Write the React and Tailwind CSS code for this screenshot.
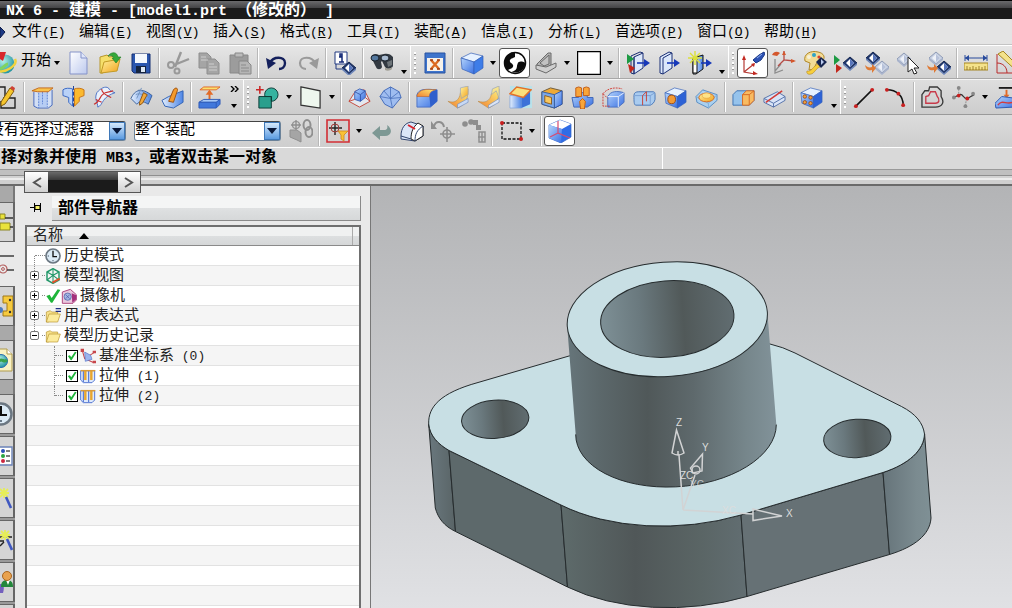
import React, { useState } from 'react';

const menus = [
    ['文件', 'F'], ['编辑', 'E'], ['视图', 'V'], ['插入', 'S'], ['格式', 'R'], ['工具', 'T'],
    ['装配', 'A'], ['信息', 'I'], ['分析', 'L'], ['首选项', 'P'], ['窗口', 'O'], ['帮助', 'H'],
];

const Svg = ({ children, size = 24 }) => (
    <svg width={size} height={size} viewBox="0 0 24 24" fill="none" stroke="none" className="shrink-0" aria-hidden="true">{children}</svg>
);

// Gradients shared by all the toolbar icons
const Defs = () => (
    <svg width="0" height="0" className="absolute" aria-hidden="true">
        <defs>
            <linearGradient id="blue" x1="0" y1="0" x2="1" y2="1"><stop offset="0" stopColor="#b4d4fc" /><stop offset="1" stopColor="#3a70e2" /></linearGradient>
            <linearGradient id="blueH" x1="0" y1="0" x2="1" y2="0"><stop offset="0" stopColor="#e3eefc" /><stop offset="1" stopColor="#4e86e6" /></linearGradient>
            <linearGradient id="gold" x1="0" y1="0" x2="1" y2="1"><stop offset="0" stopColor="#fff3a0" /><stop offset="1" stopColor="#f2a21c" /></linearGradient>
            <linearGradient id="amber" x1="0" y1="1" x2="1" y2="0"><stop offset="0" stopColor="#f08030" /><stop offset="1" stopColor="#fff07a" /></linearGradient>
            <linearGradient id="paper" x1="0" y1="0" x2="1" y2="1"><stop offset="0" stopColor="#ffffff" /><stop offset="1" stopColor="#bcc9ee" /></linearGradient>
            <radialGradient id="globe" cx="0.4" cy="0.35" r="0.7"><stop offset="0" stopColor="#b4f0e8" /><stop offset="1" stopColor="#1b8f9c" /></radialGradient>
        </defs>
    </svg>
);

const Diamond = ({ x, y, pale }) => (
    <g transform={`translate(${x} ${y})`}>
        <path d="M-7 0 0-6 7 0 0 6Z" fill={pale ? '#c9d2e4' : '#20386f'} stroke={pale ? '#8f9bb5' : '#15264f'} />
        <path d="M-7 0v2l7 6 7-6V0L0 6Z" fill={pale ? '#a9b4cd' : '#6d86ba'} />
        <path d="M-4 0 0-4 4 0 0 4Z" fill={pale ? '#eef1f8' : '#fff'} />
        <path d="M0-4 4 0 0 4Z" fill={pale ? '#b7c2da' : '#5876bd'} />
    </g>
);

const Box = ({ top = '#e6f1ff', left = 'url(#blue)', right = '#2d62d6' }) => (
    <g stroke="#3560b8" strokeWidth="0.7">
        <path d="M1 7 11 2l12 3-9 6Z" fill={top} />
        <path d="M1 7l13 4v12L2 18Z" fill={left} />
        <path d="M14 11l9-6v12l-9 6Z" fill={right} />
    </g>
);

const icons = {
    newFile: <><path d="M3 1h11l6 6v16H3Z" fill="url(#paper)" stroke="#8593c9" /><path d="M14 1v6h6" fill="#dfe6fa" stroke="#8593c9" /></>,
    open: <><path d="M2 6l7-2 2 2 8-1v5L5 22H2Z" fill="#f5df6a" stroke="#b9972a" /><path d="M6 11l16-3-3 12-16 2Z" fill="url(#gold)" stroke="#c29a26" /><path d="M10 5c4-5 9-4 10 1h3l-5 6-4-5h2c-1-2-3-3-6-2Z" fill="#35a83a" stroke="#1b7a22" strokeWidth="0.6" /></>,
    save: <><path d="M3 3h18v19H5l-2-2Z" fill="#2a56ae" stroke="#152f72" /><path d="M6 3h12v9H6Z" fill="#f4f8fd" /><path d="M7 15h10v7H7Z" fill="#15243f" /><path d="M12 16h4v5h-4Z" fill="#dde8f4" /></>,
    cut: <g stroke="#999" strokeWidth="2.4"><path d="M15 1 9 16M23 8 8 14" /><circle cx="5" cy="14" r="3" strokeWidth="2" /><circle cx="11" cy="20" r="2.5" strokeWidth="2" /></g>,
    copy: <g fill="#a5a5a5" stroke="#8e8e8e"><path d="M2 2h8l4 4v11H2Z" /><path d="M10 8h8l4 4v11H10Z" /><path d="M4 6h5M4 9h7M12 13h5M12 16h8M12 19h8" stroke="#cfcfcf" /></g>,
    paste: <g fill="#9c9c9c" stroke="#888"><path d="M2 4h18v18H2Z" /><path d="M7 2h8v4H7Z" fill="#bbb" /><path d="M11 10h8l4 4v9H11Z" fill="#b5b5b5" /><path d="M13 14h5M13 17h8M13 20h8" stroke="#8b8b8b" /></g>,
    undo: <><path d="M5 12C8 5 20 5 20 12c0 4-3 6-6 6" stroke="#14205c" strokeWidth="2.4" /><path d="M1 7l2 11 8-6Z" fill="#14205c" /></>,
    redo: <><path d="M19 12C16 5 4 5 4 12c0 4 3 6 6 6" stroke="#9a9a9a" strokeWidth="2.2" /><path d="M23 7l-2 11-8-6Z" fill="#9a9a9a" /></>,
    info: <><path d="M2 1h12v12H2Z" fill="#fff" stroke="#203880" /><path d="M7 3h2v2H7ZM6 6h3v5h2M6 11h5" stroke="#152a78" strokeWidth="1.5" /><path d="M3 13v5h7" stroke="#203880" /><Diamond x="16" y="17" /></>,
    find: <><path d="M1 6c1-3 5-4 8-2l5-1c3-1 7 0 9 3v9c-1 3-6 4-8 1l-3-6-1 1 1 5c-1 3-5 3-6 0L3 10Z" fill="#333a42" /><ellipse cx="5" cy="7" rx="4" ry="3" fill="#54789e" stroke="#1b232c" /><ellipse cx="15" cy="7" rx="4" ry="3" fill="#a9bbd0" stroke="#1b232c" /><path d="M17 11l5-2v5l-4 2Z" fill="#6d7478" /><path d="M15 16c2 2 5 2 7 0v2c-2 2-5 2-7 1Z" fill="#a2a096" /></>,
    fit: <><path d="M2 2h20v20H2Z" fill="#3e74cc" stroke="#2852a0" /><path d="M4 7h16v13H4Z" fill="#f7f2ea" /><path d="M8 9l8 9M16 9l-8 9" stroke="#dc6a22" strokeWidth="2.4" /><path d="M7 9h3M14 9h3M7 18h3M14 18h3" stroke="#a03c10" strokeWidth="1.6" /></>,
    cube: <Box left="url(#blue)" right="#3e7de8" />,
    shade: <><circle cx="12" cy="12" r="10.5" fill="#fff" stroke="#0b0b0b" strokeWidth="1.5" /><path d="M12 1.500A10.500 10.500 0 0 0 4 19c4-1 7-2 6-5-1-2-4-2-3-5 1-2 4-2 5-3Z" fill="#0b0b0b" /><path d="M22.500 12c-4-2-7-2-8 1-1 2 0 4-2 6-1 1-2 1-4 2a10.500 10.500 0 0 0 14-9Z" fill="#0b0b0b" /></>,
    hinge: <g fill="#b3b3b3" stroke="#6a6a6a"><path d="M3 13 14 2h3v12l-5 3-9-1Z" /><path d="M2 14l10 2 10-4v4l-10 6-10-4Z" fill="#cfcfcf" /><path d="M6 12 15 4v9l-5 2Z" fill="#c2c2c2" /></g>,
    white: <path d="M0 0h24v24H0Z" fill="#fff" stroke="#000" strokeWidth="2.4" />,
    clipA: <><path d="M8 6l9-4v15l-9 6Z" fill="#dce8fb" stroke="#1a2f74" /><path d="M8 6v17l-3-1V5l9-4 3 1" stroke="#1a2f74" /><path d="M1 3l7 5-7 5Z" fill="#1d9a43" /><path d="M2 13l7 4-5 5Z" fill="#c2271c" /><path d="M11 12h8" stroke="#1738b8" strokeWidth="1.6" /><path d="M18 8l6 4-6 4Z" fill="#1738b8" /></>,
    clipB: <><path d="M3 6l9-5 3 1v15l-9 6-3-1Z" fill="#dce8fb" stroke="#1a2f74" /><path d="M6 7v16M6 7l9-5" stroke="#1a2f74" /><path d="M10 12h8" stroke="#1738b8" strokeWidth="1.6" /><path d="M17 8l6 4-6 4Z" fill="#1738b8" /></>,
    clipC: <><path d="M5 7 15 4v14l-7 5H5Z" fill="url(#blueH)" stroke="#111" /><path d="M5 8h4v14H5Z" fill="#fff" stroke="#111" /><path d="M7 0v14M0 7h14M2 2l10 10M12 2 2 12" stroke="#dce13a" strokeWidth="1.4" /><path d="M13 12h6" stroke="#1738b8" strokeWidth="1.6" /><path d="M18 8l6 4-6 4Z" fill="#1738b8" /></>,
    csysA: <><path d="M3 7v14l11 2M3 21l10-8" stroke="#b53a34" strokeWidth="1.2" /><path d="M3 4l2 5H1ZM17 23l-5 1v-4ZM14 12l-1 4-3-3Z" fill="#c32a22" /><path d="M12 9l6-5 5-3 1 2-4 6-5 3Z" fill="#2d52b5" stroke="#1c3986" /><path d="M16 7l5-4" stroke="#8fb0f0" /></>,
    csysB: <><path d="M3 8v14l8-3M3 20l6-7" stroke="#8d8d8d" strokeWidth="1.3" /><path d="M12 0v9l10 1M12 9l-6 6" stroke="#b54a44" strokeWidth="1.3" /><path d="M0 4c2-4 5-4 8-2l-3 3ZM12 0l2 4h-4ZM24 10l-5 2V8Z" fill="#d4572c" /></>,
    palette: <><path d="M2 10C0 3 8-1 15 1c6 1 8 6 4 9-3 1-4 0-6 3l-2 5-5 1 1-7Z" fill="#f2dc96" stroke="#b08726" /><circle cx="6" cy="6" r="2" fill="#f6f0d8" /><circle cx="11" cy="4" r="2" fill="#2fa3c8" /><circle cx="16" cy="6" r="1.6" fill="#d8442c" /><path d="M4 20c5 1 6-5 11-7l2 3c-4 1-6 7-9 7-3 1-5-1-4-3Z" fill="#f7cf3c" stroke="#b08726" strokeWidth="0.6" /><path d="M13 11l5-5 6 5-6 6Z" fill="#16254f" /><path d="M18 8l3 3-3 3Z" fill="#b9c9ee" /></>,
    show: <><path d="M0 4l6 5-6 5Z" fill="#1d9a43" /><path d="M2 13l6 4-6 5Z" fill="#c2271c" /><Diamond x="16" y="12" /></>,
    hide: <><Diamond x="8" y="7" /><Diamond x="17" y="16" pale /><path d="M0 14c1 5 4 6 7 5v3l4-5-4-4v3c-3 1-5 0-7-2Z" fill="#df7a35" /></>,
    pick: <><Diamond x="8" y="8" pale /><path d="M12 6v15l4-3 2 5 3-1-3-5h5Z" fill="#fff" stroke="#222" /></>,
    swap: <><Diamond x="9" y="7" pale /><Diamond x="17" y="16" /><path d="M0 14c1 5 4 6 7 5v3l4-5-4-4v3c-3 1-5 0-7-2Z" fill="#df7a35" /></>,
    ruler: <><path d="M1 7h22M1 4v6M23 4v6" stroke="#284a9c" /><path d="M1 7l4-3v6ZM23 7l-4-3v6Z" fill="#284a9c" /><path d="M0 12h24v7H0Z" fill="#f4e28a" stroke="#a58522" /><path d="M3 15v4M6 16v3M9 15v4M12 16v3M15 15v4M18 16v3M21 15v4" stroke="#8a6c18" strokeWidth="0.8" /></>,
    angle: <><path d="M2 3v19h22" stroke="#b92b2b" /><path d="M2 12c6 0 10 4 10 10" stroke="#b92b2b" /><path d="M3 3 8 0l16 16v6Z" fill="#f4e28a" stroke="#a58522" /></>,
    sketch: <><path d="M2 2h10v9M2 2v9" stroke="#222" strokeWidth="1.4" /><path d="M10 13h12v10H8v-7" stroke="#222" strokeWidth="1.4" /><path d="M8 17 17 3l4 3-9 13-4 2Z" fill="#f5c52c" stroke="#7e5a10" /><path d="M17 3l4 3 1-3-3-2Z" fill="#cf4134" /></>,
    extrude: <><path d="M3 6v15l4 2h11l4-3V4" fill="#d3dff4" stroke="#4569bd" /><path d="M8 7h9v15H8Z" fill="#b7cdf4" /><path d="M8 7v16M17 6v16M12 6v13" stroke="#5f84d4" strokeDasharray="2 1" /><path d="M1 5l7-3h15l-5 4H7Z" fill="#f8c24c" stroke="#c26a1d" /></>,
    revolve: <><path d="M11 3v18l-4-4v-5l-6-2V4c2-2 7-2 10-1Z" fill="#b9d2f8" stroke="#3766c2" /><path d="M13 3v18l5-5v-4l5-2V4c-3-2-7-2-10-1Z" fill="#fbb92f" stroke="#c5741b" /><path d="M12 0v24" stroke="#1c3c92" strokeDasharray="4 2" /></>,
    sweep: <><path d="M4 7C8 2 13 0 16 2c1 2 3 4 7 5-6 2-9 4-12 8-2 3-3 6-6 7 0-6-4-8-1-15Z" fill="#eaf1fc" stroke="#4d74c6" /><path d="M1 19c6-2 6-8 9-10 4-4 7-2 11-4M9 3c0 5 6 7 10 9M3 14l6 3" stroke="#c93232" strokeWidth="1.2" /></>,
    face: <><path d="M1 13C5 4 12 1 23 10l-4 9c-6-4-9-3-12 0Z" fill="url(#blueH)" stroke="#395f99" /><path d="M6 9c4-2 8-1 12 7M9 4c5 1 8 4 11 9M12 2 7 13" stroke="#7192bd" /><path d="M10 17 14 7l4 2-5 9-3 2Z" fill="#f2a83a" stroke="#8e5613" /></>,
    draft: <><path d="M1 15l7-4 15-6v12L13 23 4 21Z" fill="url(#blueH)" stroke="#3263b5" /><path d="M8 16 13 4c2-3 5-2 4 1l-4 12Z" fill="#f39a2c" stroke="#9a4e10" /></>,
    pad: <><path d="M2 4l4-3h17l-4 3Z" fill="#fae06e" stroke="#e26b28" /><path d="M12 5v9" stroke="#e26b28" strokeWidth="2" /><path d="M8 9l4-5 4 5Z" fill="#e26b28" /><path d="M1 17l5-3h17l-4 3Z" fill="#a8c9f8" stroke="#2f5bb8" /><path d="M1 17h18v6H1ZM19 17l4-3v5l-4 4" fill="#4178dc" stroke="#2f5bb8" /></>,
    boolean: <><path d="M0 4h8M4 0v8" stroke="#c92626" strokeWidth="1.6" /><circle cx="16" cy="9" r="7" fill="#36b3a0" stroke="#0b3c36" /><path d="M3 11h13v12H3Z" fill="#2a9f8d" stroke="#0b3c36" /><path d="M9 11h7v5" stroke="#0b3c36" /></>,
    plane: <path d="M2 1l20 4v18L2 20Z" fill="#eef7ee" stroke="#333" strokeWidth="1.3" />,
    pyramid: <><path d="M1 16 8 5l9-1 6 12-11 6Z" stroke="#c44a3e" fill="#e4e8ef" /><path d="M7 6l5-3 6 2v7l-5 4-6-2Z" fill="url(#blue)" stroke="#4166b8" /><path d="M7 6l6 3 5-4M13 9v7" stroke="#27489c" strokeWidth="0.8" /><path d="M1 16l6-2M23 16l-5-4" stroke="#c44a3e" /></>,
    octa: <><path d="M12 1l9 5 2 6-9 11-8-4-5-8 4-6Z" fill="#9fbdf0" stroke="#446bb8" /><path d="M12 1v12l2 10M1 11l11 2 11-1M5 5l7 8 9-7" stroke="#446bb8" strokeWidth="0.8" /></>,
    blend: <><path d="M1 9c2-6 8-6 21-5v12l-7 6H1Z" fill="url(#blue)" stroke="#4c72c4" /><path d="M1 10c3-7 9-7 20-6-5 1-7 3-7 7H1Z" fill="url(#amber)" stroke="#c0682a" strokeWidth="0.7" /><path d="M14 11c0-4 3-6 8-7v12l-7 6Z" fill="#3060cc" /></>,
    flange: <><path d="M1 16c6 2 12 0 13-9l8-4c0 10-2 16-11 20Z" fill="url(#amber)" stroke="#b98a48" strokeWidth="0.6" /><path d="M14 7V2l8-2v9l-7 4Z" fill="url(#gold)" stroke="#97a3b8" strokeWidth="0.7" /><path d="M11 19l11-6v4l-11 6Z" fill="#c8d9f5" stroke="#7290c4" strokeWidth="0.7" /></>,
    flangeB: <><path d="M0 16c7 2 13 0 14-8l8-5c0 10-2 16-11 20Z" fill="url(#amber)" stroke="#b98a48" strokeWidth="0.6" /><path d="M15 3l7-3v13l-3-8-5 4Z" fill="#f7e48c" stroke="#97a3b8" strokeWidth="0.7" /><path d="M11 20l11-7v4l-11 6Z" fill="#dbe5f6" stroke="#7290c4" strokeWidth="0.7" /></>,
    chamfer: <><path d="M1 0h23v23H1Z" fill="#b9e2ea" /><path d="M1 10h12v13H1Z" fill="url(#blueH)" stroke="#7b9fd8" strokeWidth="0.7" /><path d="M13 11l9-5v13l-9 4Z" fill="#3c72d8" /><path d="M1 8l7-7 15 3-8 8Z" fill="#fbe17c" stroke="#e2702a" strokeWidth="1.5" /></>,
    shell: <><path d="M2 6l9-4 12 3v14l-8 4-13-4Z" fill="#f0aa35" stroke="#6e5a3a" /><path d="M15 9l8-4v14l-8 4Z" fill="url(#blue)" stroke="#2c58b2" /><path d="M2 6l13 3v14L2 19Z" fill="#7ba8ea" stroke="#3a5f9e" /><path d="M5 10l7 2v7l-7-2Z" fill="#f8c75e" stroke="#8a5d22" /></>,
    pattern: <><path d="M1 12h7V7h9v5h6v6l-6 4H3Z" fill="url(#blue)" stroke="#4169b8" /><path d="M5 2l3-1 3 1v9H5ZM13 2l3-1 3 1v8h-6Z" fill="#f8a53a" stroke="#c25d17" /><path d="M9 16l3-3 3 3-1 8h-4Z" fill="#f8a53a" stroke="#c25d17" /></>,
    thick: <><path d="M6 11c3-6 10-6 17-4v10l-6 5H6Z" fill="url(#blue)" stroke="#4a70bf" /><path d="M1 8c5-6 13-7 20-5M1 8v13h8M1 8l5 5" stroke="#d24038" strokeDasharray="2 1" /><path d="M6 11h11l6-4M17 11v11" stroke="#e7effc" /></>,
    tube: <><path d="M1 10c0-3 2-4 5-4h15c2 0 2 2 2 3v5c-1 4-3 5-5 6H3c-2 0-2-4-2-10Z" fill="#a9cbef" stroke="#4977b7" /><path d="M2 10h16l5-3M18 10v10" stroke="#7ba1d4" /><path d="M10 10v10M10 10l4-4v10" stroke="#c74238" /></>,
    hole: <><Box /><ellipse cx="8" cy="14" rx="4" ry="4.500" fill="#f29b35" stroke="#9c4b14" /></>,
    boss: <><path d="M1 11 8 4l15 5v6l-9 8L2 17Z" fill="#a9d0f0" stroke="#5a8ec4" /><path d="M14 18v5M1 11l13 7 9-9" stroke="#7fb0da" /><ellipse cx="12" cy="12" rx="8" ry="4.500" fill="url(#gold)" stroke="#d56c23" /><ellipse cx="12" cy="10" rx="4.500" ry="2.800" fill="#fde388" stroke="#e09a3a" strokeWidth="0.6" /></>,
    split: <><path d="M1 9l4-4h18v10l-5 5H1Z" fill="#96c3ec" stroke="#3f74b4" /><path d="M11 9l4-4h8v10l-5 5h-7Z" fill="#f8bb62" stroke="#d76a23" /><path d="M11 9h7l5-4M18 9v11" stroke="#d76a23" /></>,
    trim: <><path d="M1 13 15 6l8 5v4L11 22 1 17Z" fill="#d9e4f7" stroke="#5471a9" /><path d="M1 13l10 5 12-7M11 18v4" stroke="#5471a9" /><path d="M3 17 20 5" stroke="#d33a35" strokeWidth="1.6" /></>,
    array: <><Box /><g fill="#f2a13c" stroke="#93430e" strokeWidth="0.8"><circle cx="5" cy="11" r="1.8" /><circle cx="11" cy="12" r="1.8" /><circle cx="5" cy="17" r="1.8" /><circle cx="11" cy="18" r="1.8" /></g></>,
    line: <><path d="M3 21 20 4" stroke="#111" strokeWidth="1.6" /><circle cx="3" cy="21" r="2" fill="#c91f1f" /><circle cx="20" cy="4" r="2" fill="#c91f1f" /></>,
    arc: <><path d="M3 4c10 0 17 6 17 16" stroke="#111" strokeWidth="1.6" /><circle cx="3" cy="4" r="2" fill="#c91f1f" /><circle cx="15" cy="8" r="2" fill="#c91f1f" /><circle cx="20" cy="20" r="2" fill="#c91f1f" /></>,
    offset: <><path d="M1 22V9l3-4h4l1-4h8l4 4v6c4 6 1 11-6 11Z" stroke="#3a3a3a" strokeWidth="1.4" /><path d="M5 18v-7l3-1 2-4h5l2 5c3 3 2 7-2 7Z" stroke="#c83a4a" strokeWidth="1.4" /></>,
    spline: <><path d="M1 12c6-1 7-6 11-1 3 5 7 0 11-2" stroke="#333" strokeWidth="1.3" /><path d="M7 3v8M15 13l-1 8" stroke="#8e8e8e" strokeDasharray="2 1" /><circle cx="7" cy="2" r="2" fill="#888" /><circle cx="14" cy="21" r="2" fill="#888" /><circle cx="2" cy="12" r="2" fill="#888" /><circle cx="22" cy="8" r="2" fill="#888" /><circle cx="7" cy="10" r="2" fill="#c91f1f" /><circle cx="16" cy="13" r="2" fill="#c91f1f" /></>,
    project: <><path d="M4 2h18" stroke="#111" strokeWidth="1.8" /><path d="M12 4v6" stroke="#e26b28" strokeWidth="2" /><path d="M9 9h6l-3 4Z" fill="#e26b28" /><path d="M0 18l7-7 16 2-3 9-19 1Z" fill="url(#blue)" stroke="#2c58b0" /><path d="M3 20c5-7 9 1 18-4" stroke="#d63b3b" strokeWidth="1.5" /></>,
    link: <g stroke="#8f8f8f" strokeWidth="2"><path d="M1 11h7l4 3v9l-4-2-7-3Z" fill="#a5a5a5" strokeWidth="1" /><path d="M7 1v10M2 6h10" strokeWidth="1.4" /><circle cx="7" cy="6" r="3.5" strokeWidth="1.2" /><ellipse cx="18" cy="6" rx="3.5" ry="5" /><ellipse cx="20" cy="13" rx="3.5" ry="5" /></g>,
    snap: <><path d="M1 1h22v22H1Z" fill="#d3d0d0" stroke="#d22e35" strokeWidth="1.6" /><path d="M9 3v13M3 9h13" stroke="#222" strokeWidth="1.4" /><circle cx="9" cy="9" r="4" stroke="#a63b38" /><path d="M12 12h10l-4 4v6l-3-2v-4Z" fill="#f9c235" stroke="#d1861c" strokeWidth="0.8" /></>,
    back: <path d="M3 14l8-7v4h4c3 0 4-2 3-5 6 4 5 11-2 11h-5v4Z" fill="#7d9894" />,
    mirror: <><path d="M1 17C1 9 5 4 11 3l12 4v10l-8 5-14-2Z" fill="#dbe6f8" stroke="#33466f" /><path d="M11 20c0-7 2-12 7-16l5 3v10l-8 5Z" fill="#fff" stroke="#222" /><path d="M15 22c0-7 2-11 8-15M1 17l10 3" stroke="#33466f" /><path d="M8 6l7 4" stroke="#d9232c" strokeWidth="2" /></>,
    rotPoint: <g stroke="#8e8e8e" strokeWidth="1.6"><path d="M3 7c2-6 9-5 10 1" strokeWidth="2" /><path d="M0 2v8h6Z" fill="#8e8e8e" stroke="none" /><circle cx="16" cy="15" r="4" /><path d="M16 8v15M9 15h15" /></g>,
    path: <g fill="#8e8e8e"><circle cx="3" cy="5" r="2.8" /><circle cx="9" cy="3" r="2.8" /><path d="M10 1h6v5h-5ZM14 6h5v5h-5Z" /><path d="M17 13h6v10h-6ZM16 18h7M20 13v10" fill="none" stroke="#8e8e8e" strokeWidth="1.5" /></g>,
    marquee: <><path d="M3 4h19v16H3Z" stroke="#111" strokeWidth="1.3" strokeDasharray="3 1.5" /><circle cx="3" cy="4" r="2" fill="#c91f1f" /><circle cx="22" cy="20" r="2" fill="#c91f1f" /></>,
    wireCube: <><path d="M1 6 12 1l11 4v13l-10 6-12-5Z" fill="#2f6ce6" stroke="#2f62c4" strokeWidth="0.7" /><path d="M1 6 12 1l11 4-9 5Z" fill="#fff" /><path d="M1 6l13 4-1 14-12-5Z" fill="url(#blue)" /><path d="M10 2v12l12 5M10 14l-8 4" stroke="#d84a70" strokeWidth="1.2" /></>,
};

const rowOne = [
    'newFile', 'open', 'save', '|', 'cut', 'copy', 'paste', '|', 'undo', 'redo', '|', 'info', '|', 'find', '...', '#',
    'fit', '|', 'cube', 'v', '*shade', 'hinge', 'v', 'white', 'v', '|', 'clipA', 'clipB', 'clipC', '...', '#',
    '*csysA', 'csysB', 'palette', 'show', 'hide', 'pick', 'swap', '|', 'ruler', 'angle',
];
const rowTwo = [
    '|', 'extrude', 'revolve', 'sweep', '|', 'face', 'draft', '|', 'pad', '>>', '#', 'boolean', 'v', 'plane', 'v', '|',
    'pyramid', 'octa', '|', 'blend', 'flange', 'flangeB', 'chamfer', 'shell', 'pattern', 'thick', 'tube', 'hole', 'boss', '|',
    'split', 'trim', '|', 'array', '...', '#', 'line', 'arc', '|', 'offset', 'spline', 'v', 'project',
];
const rowThree = ['link', '|', 'snap', 'v', 'back', 'mirror', 'rotPoint', 'path', '|', 'marquee', 'v', '|', '*wireCube'];

const Arrow = () => <span className="block size-0 border-x-[3px] border-t-[4px] border-x-transparent border-t-black" />;

const Tool = ({ name, size }) => {
    if (name === '|') return <span className="w-[6px] h-[30px] shrink-0 flex justify-center"><span className="w-[2px] h-full border-l border-[#b8b8b8] bg-white" /></span>;
    if (name === '#') return (
        <span className="w-[9px] h-full shrink-0 border-l border-white flex items-center justify-center">
            <span className="w-[2px] h-[22px] bg-[repeating-linear-gradient(#fff_0_2px,#999_2px_3px,transparent_3px_5px)]" />
        </span>
    );
    if (name === 'v') return <button aria-label="展开" className="w-[12px] h-[30px] shrink-0 flex items-center justify-center"><Arrow /></button>;
    if (name === '...') return <button aria-label="工具条选项" className="w-[13px] h-[30px] shrink-0 flex items-end justify-center pb-1"><Arrow /></button>;
    if (name === '>>') return (
        <button aria-label="更多" className="w-[18px] h-[30px] shrink-0 flex flex-col items-center justify-between py-1">
            <svg width="9" height="6" viewBox="0 0 9 6" fill="none" stroke="#000" strokeWidth="1.4"><path d="M1 0l3 3-3 3M5 0l3 3-3 3" /></svg>
            <Arrow />
        </button>
    );
    const active = name[0] === '*';
    const id = active ? name.slice(1) : name;
    return (
        <button aria-label={id} className={`w-[31px] h-[30px] shrink-0 flex items-center justify-center ${active ? 'bg-white border border-[#555] rounded-[3px]' : ''}`}>
            <Svg size={size}>{icons[id]}</Svg>
        </button>
    );
};

const Tools = ({ list, size }) => list.map((name, i) => <Tool key={i} name={name} size={size} />);

const Latin = ({ children }) => <span className="text-[13px]">{children}</span>;
const BoldLatin = ({ children }) => <span className="text-[15px] whitespace-pre">{children}</span>;

const Combo = ({ label, value, className }) => (
    <span className={`relative block h-[20px] shrink-0 ${className}`}>
        <select aria-label={label} className="appearance-none block w-full h-full bg-white border border-[#6b8299] border-t-[#444] rounded-[3px] text-[15px] leading-[18px] text-black">
            <option>{value}</option>
        </select>
        <span className="pointer-events-none absolute right-px inset-y-px w-[16px] bg-gradient-to-b from-[#d6e9fb] to-[#5b9be0] border border-[#3f78b8] flex items-center justify-center">
            <span className="size-0 border-x-[5px] border-t-[6px] border-x-transparent border-t-[#0a1838]" />
        </span>
    </span>
);

const Folder = () => <><path d="M2 6l6-2 2 2h9v4L5 21H2Z" fill="#f6e08a" stroke="#b8942f" /><path d="M6 9h17l-4 12H2Z" fill="#fceb9c" stroke="#b8942f" /></>;

const Clock = () => (
    <><circle cx="12" cy="12" r="10.5" fill="#dcebf6" stroke="#6b7782" strokeWidth="2.5" /><path d="M12 4v9h6" stroke="#111" strokeWidth="2" /><path d="M4 12h2M12 18v2" stroke="#456" strokeWidth="1.5" /></>
);

const Check = () => <path d="M2 12l5-2 3 5L19 2l4 1-12 19H9Z" fill="#1fb53a" />;

const treeIcons = {
    clock: <Clock />,
    view: <><path d="M12 1l9 5v12l-9 5-9-5V6Z" stroke="#23986a" strokeWidth="2.2" /><path d="M3 6l9 5 9-5M12 11v12M3 18l9-7 9 7M12 1v10" stroke="#23986a" strokeWidth="1.6" /><path d="M11 22l11-6" stroke="#e0512a" strokeWidth="3" /></>,
    camera: <><path d="M2 6 14 2l9 8v8l-5 5H2Z" fill="#e9c8de" stroke="#b04a80" strokeWidth="1.5" /><path d="M16 8l7 3v6l-6 5Z" fill="#a4307c" /><circle cx="10" cy="13" r="5.5" fill="#a3b7e2" stroke="#45569c" /><path d="M7 10l6 6M13 10l-6 6" stroke="#4f4fa8" /></>,
    expr: <><Folder /><path d="M16 1h8M16 5h8" stroke="#1d2c84" strokeWidth="2" /></>,
    folder: <Folder />,
    csys: <><path d="M3 2l4 14 14 6M7 16l14-9" stroke="#c8464a" strokeWidth="1.6" /><path d="M7 6l9 5 2 6-10 3Z" fill="#9bb5ee" stroke="#5474c8" /><path d="M1 1h5v5H1ZM19 4h5v4h-5ZM19 19h5v4h-5Z" fill="#c8464a" /></>,
    extrude: <><path d="M1 4h21v14l-4 4H5l-4-4Z" fill="#dfeafb" stroke="#4a6fd0" strokeWidth="1.4" /><path d="M8 3v15M17 3v15" stroke="#e9a52c" strokeWidth="3.6" /><path d="M5 4v17M13 4v17" stroke="#4a6fd0" strokeWidth="1.6" /><path d="M1 4h22" stroke="#d89a3a" strokeWidth="2.2" /></>,
};

const tree = [
    { label: '历史模式', icon: 'clock' },
    { label: '模型视图', icon: 'view', toggle: '+' },
    { label: '摄像机', icon: 'camera', toggle: '+', tick: true },
    { label: '用户表达式', icon: 'expr', toggle: '+' },
    { label: '模型历史记录', icon: 'folder', toggle: '-' },
    { label: '基准坐标系', suffix: ' (0)', icon: 'csys', child: true },
    { label: '拉伸', suffix: ' (1)', icon: 'extrude', child: true },
    { label: '拉伸', suffix: ' (2)', icon: 'extrude', child: true },
];

const TreeRow = ({ item, index }) => {
    const [checked, setChecked] = useState(true);
    return (
        <li className="h-5 flex items-center border-b border-[#e2e2e2] odd:bg-white even:bg-[#f5f5f5]">
            {item && !item.child && (
                <>
                    <span className="w-[15px] h-full shrink-0 flex flex-col items-center">
                        <span className={`flex-1 w-px ${index > 0 ? 'border-l border-dotted border-[#888]' : ''}`} />
                        {item.toggle && (
                            <button aria-label={item.label} className="size-[9px] shrink-0 border border-[#777] rounded-[2px] bg-white flex items-center justify-center">
                                <svg width="5" height="5" viewBox="0 0 5 5" stroke="#000"><path d={item.toggle === '+' ? 'M0 2.5h5M2.5 0v5' : 'M0 2.5h5'} /></svg>
                            </button>
                        )}
                        <span className={`flex-1 w-px ${item.toggle !== '-' ? 'border-l border-dotted border-[#888]' : ''}`} />
                    </span>
                    <span className={`border-t border-dotted border-[#888] ${item.toggle ? 'w-[3px]' : 'w-[10px] -ml-[7px]'}`} />
                    {item.tick && <Svg size={16}><Check /></Svg>}
                    <Svg size={16}>{treeIcons[item.icon]}</Svg>
                </>
            )}
            {item && item.child && (
                <>
                    <span className={`ml-[27px] w-px border-l border-dotted border-[#888] ${index === 7 ? 'h-[10px] self-start' : 'h-5'}`} />
                    <span className="w-[8px] mr-[3px] border-t border-dotted border-[#888]" />
                    <label className="relative size-[12px] shrink-0 mr-[2px]">
                        <input type="checkbox" aria-label={item.label} checked={checked} onChange={() => setChecked(!checked)} className="appearance-none block size-[12px] border border-black bg-white" />
                        {checked && <span className="absolute inset-px pointer-events-none"><Svg size={10}><Check /></Svg></span>}
                    </label>
                    <Svg size={16}>{treeIcons[item.icon]}</Svg>
                </>
            )}
            {item && <span className="pl-[3px] pt-[2px] text-[15px] leading-[18px] text-[#222] whitespace-pre">{item.label}<Latin>{item.suffix}</Latin></span>}
        </li>
    );
};

const sideTabs = [
    { filler: true, h: 'h-4' },
    { name: '装配导航器', icon: <><path d="M0 4h5v5H0ZM0 13h10v7H0Z" fill="#e9e23c" stroke="#8b8622" /><path d="M5 8h12M10 17h7" stroke="#333" strokeWidth="1.4" /></> },
    { name: '部件导航器', active: true, icon: <><path d="M0 4h14" stroke="#333" strokeWidth="1.4" /><circle cx="3" cy="17" r="4" stroke="#b25a5a" strokeWidth="1.2" /><circle cx="3" cy="17" r="1.4" stroke="#b25a5a" /><path d="M7 18h7" stroke="#333" strokeWidth="1.4" /></> },
    { name: '重用库', icon: <><path d="M3 2h10v20H3v-5h4v-8H3Z" fill="#f6ca3e" stroke="#a07819" /><circle cx="10" cy="6" r="1.2" fill="#333" /><circle cx="10" cy="18" r="1.2" fill="#333" /><circle cx="0" cy="16" r="3" fill="#4b7cc0" /></> },
    { filler: true, h: 'h-[14px]' },
    { name: '网页', icon: <><path d="M-1 1h8l5 5v17H-1Z" fill="#f9f2c4" stroke="#b09b4c" /><path d="M7 1v5h5" fill="#fff" stroke="#b09b4c" /><circle cx="1" cy="13" r="6.500" fill="url(#globe)" stroke="#286bb0" /><path d="M-1 13c3-3 5 2 8-1" stroke="#3ba24b" strokeWidth="3" /></> },
    { filler: true, h: 'h-[14px]' },
    { name: '历史', icon: <g transform="translate(-11 0)"><Clock /></g> },
    { name: '材料', gap: true, icon: <><path d="M-2 3h14v18H-2Z" fill="#fff" stroke="#6b83b8" strokeWidth="1.4" /><circle cx="3" cy="7" r="2" fill="#2b51b8" /><circle cx="3" cy="12" r="2" fill="#2ba440" /><circle cx="3" cy="17" r="2" fill="#cc2740" /><path d="M6 7h4M6 12h4M6 17h4" stroke="#555" strokeWidth="1.4" /></> },
    { name: '向导', gap: true, icon: <><path d="M4 2v10M-1 7h10M0 3l8 8M8 3l-8 8" stroke="#e6ee58" strokeWidth="1.8" /><path d="M6 11l5 11" stroke="#4058c0" strokeWidth="2.600" /></> },
    { name: '加工向导', gap: true, icon: <><path d="M-1 9h13M-2 13h6M0 18l4-4" stroke="#222" strokeWidth="1.4" /><path d="M5 2v10M0 7h10M1 3l8 8M9 3l-8 8" stroke="#e6ee58" strokeWidth="1.8" /><path d="M7 11l5 11" stroke="#4058c0" strokeWidth="2.600" /></> },
    { name: '角色', gap: true, icon: <><path d="M0 14c5 0 4 5 3 9H0Z" fill="#7460bd" /><path d="M1 17c0-5 2-7 6-7s6 2 6 7Z" fill="#23873b" /><path d="M6 10h4l-2 5Z" fill="#fff" /><circle cx="7" cy="6" r="4.500" fill="#e9a24e" stroke="#a8651f" /></> },
    { name: '系统', gap: true, icon: <path d="M0 2h12v8H0Z" fill="#bfc7d6" /> },
];

const Sidebar = () => (
    <nav className="w-[15px] shrink-0 overflow-hidden flex flex-col bg-[#9a9a9a]">
        {sideTabs.map((tab, i) => tab.filler ? (
            <div key={i} className={`${tab.h} shrink-0 bg-[#a9a9a9] border-r-2 border-[#777]`} />
        ) : (
            <button
                key={i}
                aria-label={tab.name}
                className={`shrink-0 overflow-hidden flex items-center justify-start ${tab.gap ? 'mt-[2px]' : ''} ${tab.active ? 'h-11 bg-[#e9e9e9]' : 'h-10 bg-[#d4d4d4] border-y border-r-2 border-[#666]'}`}
            >
                <Svg>{tab.icon}</Svg>
            </button>
        ))}
    </nav>
);

const Navigator = () => (
    <aside className="w-[356px] shrink-0 bg-[#e9e9e9] border-r border-[#777] flex flex-col pl-[10px] pr-[9px] pt-[10px]">
        <div className="flex items-center h-[25px] shrink-0">
            <button aria-label="固定" className="w-[27px] h-full pl-[5px] pb-1 flex items-center">
                <svg width="12" height="10" viewBox="0 0 12 10" fill="none" stroke="#000"><path d="M0 5.5h4M4.5 1v9M10.5 1v9" /><path d="M5 3.5h5v4H5Z" fill="#f4ef6a" /></svg>
            </button>
            <h2 className="flex-1 h-full pl-[6px] pt-[2px] text-[16px] leading-[22px] font-bold border-r border-b border-[#8a8a8a] bg-[linear-gradient(#f4f5f5_0_50%,#dfe1e2_50%,#d6d8d9)]">部件导航器</h2>
        </div>
        <div className="mt-1 flex-1 min-h-0 overflow-hidden border-2 border-b-0 border-[#6f6f6f] bg-white">
            <div className="h-[19px] flex border-b border-[#8a8a8a] bg-[linear-gradient(#f0f1f1_0_50%,#dddfe0_50%,#d5d7d8)]">
                <button className="flex-1 flex items-center gap-[16px] pl-[6px] text-[15px] leading-[18px] text-[#222]">
                    <span className="pt-[2px]">名称</span>
                    <span className="size-0 border-x-[5px] border-b-[6px] border-x-transparent border-b-black" />
                </button>
                <span className="w-[7px] border-l border-[#aaa]" />
            </div>
            <ul>
                {Array.from({ length: 18 }, (_, i) => <TreeRow key={i} item={tree[i]} index={i} />)}
            </ul>
        </div>
    </aside>
);

const Viewport = () => (
    <main className="flex-1 min-w-0 bg-gradient-to-b from-[#b3b4b6] to-[#e0e1e4]">
        <svg className="block w-full h-full" viewBox="371 186 641 422" preserveAspectRatio="xMidYMid slice" role="img" aria-label="model1">
            <defs>
                <linearGradient id="wall" gradientUnits="userSpaceOnUse" x1="568" y1="0" x2="777" y2="0">
                    <stop offset="0" stopColor="#66757a" /><stop offset="0.15" stopColor="#5c686b" /><stop offset="0.38" stopColor="#505859" /><stop offset="0.6" stopColor="#5e696c" /><stop offset="0.85" stopColor="#76868b" /><stop offset="1" stopColor="#82939a" />
                </linearGradient>
                <linearGradient id="bore">
                    <stop offset="0" stopColor="#7e9096" /><stop offset="0.3" stopColor="#6a797e" /><stop offset="0.62" stopColor="#515959" /><stop offset="1" stopColor="#616d71" />
                </linearGradient>
                <linearGradient id="front">
                    <stop offset="0" stopColor="#5e6b6b" /><stop offset="0.4" stopColor="#505758" /><stop offset="0.75" stopColor="#5a6565" /><stop offset="1" stopColor="#626e72" />
                </linearGradient>
                <linearGradient id="leftEnd"><stop offset="0" stopColor="#6a787e" /><stop offset="1" stopColor="#596466" /></linearGradient>
                <linearGradient id="rightEnd"><stop offset="0" stopColor="#66747a" /><stop offset="0.7" stopColor="#7b8b90" /><stop offset="1" stopColor="#7f9095" /></linearGradient>
            </defs>
            <g stroke="#262c2e" strokeWidth="1" strokeLinejoin="round">
                <path d="M428.7 424 435.3 508C438 518 444 526 455.5 531.5L449 450.5C438 444 430 436 428.7 424Z" fill="url(#leftEnd)" />
                <path d="M449 450.5 455.5 531.5 567.5 587 561 505Z" fill="#5d696b" />
                <path d="M561 505 567.5 587A167.5 96 -4.2 0 0 747 596.5L741 515A167.5 96 -4.2 0 1 561 505Z" fill="url(#front)" />
                <path d="M741 515 747 596.5 889.5 554.5 883 472.5Z" fill="#667175" />
                <path d="M883 472.5 889.5 554.5C914 547 930 535 931 518L924.6 434C924 450 909 464 883 472.5Z" fill="url(#rightEnd)" />
                <path d="M569 356 478 382.500C440 393 428 407 428.700 424C430 436 438 444 449 450.500L561 505A167.5 96 -4.2 0 0 741 515L883 472.5C909 464 924 450 924.500 434C923 423 916 414 901.500 406.500L795 353Q783 347 770 344L670 330Z" fill="#c8dfe4" />
                <ellipse cx="495.2" cy="419.3" rx="33.7" ry="19.1" transform="rotate(-4.2 495.2 419.3)" fill="url(#bore)" />
                <ellipse cx="857.3" cy="438.4" rx="33.7" ry="19.1" transform="rotate(-4.2 857.3 438.4)" fill="url(#bore)" />
            </g>
            <path d="M567 324 575.700 434.400A100.400 57.200 -4.200 0 0 776.300 424.600L767.500 314Z" fill="url(#wall)" />
            <path d="M575.700 434.400A100.400 57.200 -4.200 0 0 776.300 424.600" fill="none" stroke="#262c2e" />
            <g stroke="#262c2e" strokeWidth="1">
                <ellipse cx="667.3" cy="319.2" rx="100.3" ry="57.2" transform="rotate(-4.2 667.3 319.2)" fill="#c8dfe4" />
                <ellipse cx="667.3" cy="319" rx="66.8" ry="38.2" transform="rotate(-4.2 667.3 319)" fill="url(#bore)" />
            </g>
            <g fill="none" stroke="#d2d3d4" strokeWidth="1.5">
                <path d="M683 510 679 455M683 510 695 475M683 510 753 514" />
                <path d="M676.5 430 672 453Q678 457 684 453ZM678 451v4" />
                <path d="M702.5 454 690.5 468 693 473 702 471Z" />
                <circle cx="696" cy="470" r="4" />
                <path d="M753 509v11.5L782 516Z" />
            </g>
            <g fill="#dcdddd" className="font-['Liberation_Sans',sans-serif]" fontSize="10">
                <text x="676" y="426">Z</text>
                <text x="702" y="451">Y</text>
                <text x="786" y="517">X</text>
                <text x="680" y="479">ZC</text>
                <text x="690" y="488" fillOpacity="0.8">YC</text>
                <text x="722" y="514">XC</text>
            </g>
        </svg>
    </main>
);

const App = () => (
    <div className="h-screen flex flex-col overflow-hidden bg-[#d8d8d8] text-black font-['Liberation_Mono','Noto_Sans_CJK_SC',monospace]">
        <Defs />
        <header className="h-[19px] shrink-0 pl-[6px] text-white text-[16px] leading-[20px] font-bold whitespace-pre overflow-hidden border-t border-black bg-[linear-gradient(#6a6a6c_0,#434345_7px,#1b1b1b_7px)]">
            <BoldLatin>{'NX 6 - '}</BoldLatin>建模<BoldLatin>{' - [model1.prt '}</BoldLatin>（修改的）<BoldLatin>{' ]'}</BoldLatin>
        </header>

        <nav className="h-[26px] shrink-0 flex items-center overflow-hidden bg-[#e4e4e4] border-b border-[#c4c4c4]">
            <svg width="12" height="16" viewBox="0 0 12 16" className="shrink-0" aria-hidden="true"><path d="M0 3l5 5-5 6Z" fill="#1d3a86" stroke="#0e1d4a" /></svg>
            {menus.map(([label, key]) => (
                <button key={key} className={`h-full shrink-0 pt-[2px] text-left text-[15px] leading-[24px] whitespace-nowrap ${label.length > 2 ? 'w-[82px]' : 'w-[67px]'}`}>
                    {label}<Latin>(<u>{key}</u>)</Latin>
                </button>
            ))}
        </nav>

        <div className="h-[34px] shrink-0 flex items-center overflow-hidden border-t border-white bg-gradient-to-b from-[#e6e6e6] to-[#d0d0d0]">
            <button className="w-[63px] h-full shrink-0 flex items-center text-[15px]">
                <svg width="18" height="24" viewBox="0 0 18 24" className="shrink-0 mr-[3px]" aria-hidden="true">
                    <circle cx="5" cy="13" r="9.5" fill="url(#globe)" />
                    <path d="M-2 20c8 2 20-6 17-12" fill="none" stroke="#f0d23c" strokeWidth="2.5" />
                    <path d="M0 1h6l-3 9-3-2Z" fill="#d8282c" />
                    <path d="M0 18c4-1 5-5 8-5" fill="none" stroke="#7fd460" strokeWidth="3" />
                </svg>
                开始
                <span className="ml-[3px]"><Arrow /></span>
            </button>
            <Tools list={rowOne} size={24} />
        </div>

        <div className="h-[35px] shrink-0 flex items-center overflow-hidden border-t border-[#f4f4f4] shadow-[0_-1px_0_#a8a8a8] bg-gradient-to-b from-[#dedede] to-[#cdcdcd]">
            <button aria-label="草图" className="w-[21px] h-full shrink-0 flex items-center justify-end pr-[4px] overflow-hidden"><Svg>{icons.sketch}</Svg></button>
            <Tools list={rowTwo} size={23} />
        </div>

        <div className="h-[33px] shrink-0 flex items-center overflow-hidden border-t border-[#9a9a9a] bg-gradient-to-b from-[#dcdcdc] to-[#cecece]">
            <Combo label="选择过滤器" value="没有选择过滤器" className="-ml-[12px] w-[138px]" />
            <Combo label="选择范围" value="整个装配" className="ml-[8px] mr-[4px] w-[147px]" />
            <Tools list={rowThree} size={24} />
        </div>

        <div className="h-[22px] shrink-0 flex items-center border-t border-white bg-[#d9d9d9]">
            <p className="w-[663px] h-full pl-px text-[16px] leading-[20px] font-bold border-r border-white whitespace-nowrap">
                择对象并使用<BoldLatin>{' MB3'}</BoldLatin>，或者双击某一对象
            </p>
        </div>

        <div className="relative h-[17px] shrink-0 border-t border-b-2 border-t-[#999] border-b-[#6a6a6a] bg-[linear-gradient(#c0c0c0_0_5px,#8f8f8f_5px_6px,#d2d2d2_6px_8px,#ededed_8px_10px,#cfcfcf_10px)]">
            <div className="absolute left-[24px] top-[1px] w-[117px] h-[22px] flex border border-[#555] bg-[#1c1c1c]">
                <button aria-label="向左" className="w-[23px] bg-gradient-to-b from-white to-[#d0d0d0] flex items-center justify-center">
                    <svg width="10" height="11" viewBox="0 0 10 11" fill="none" stroke="#555" strokeWidth="2"><path d="M9 1 2 5.5l7 4.5" /></svg>
                </button>
                <span className="flex-1 bg-[linear-gradient(#6a6a6a_0,#3a3a3a_8px,#1b1b1b_8px)]" />
                <button aria-label="向右" className="w-[22px] bg-gradient-to-b from-white to-[#d0d0d0] flex items-center justify-center">
                    <svg width="10" height="11" viewBox="0 0 10 11" fill="none" stroke="#555" strokeWidth="2"><path d="M1 1l7 4.5L1 10" /></svg>
                </button>
            </div>
        </div>

        <div className="flex-1 min-h-0 flex">
            <Sidebar />
            <Navigator />
            <Viewport />
        </div>
    </div>
);

export default App;
